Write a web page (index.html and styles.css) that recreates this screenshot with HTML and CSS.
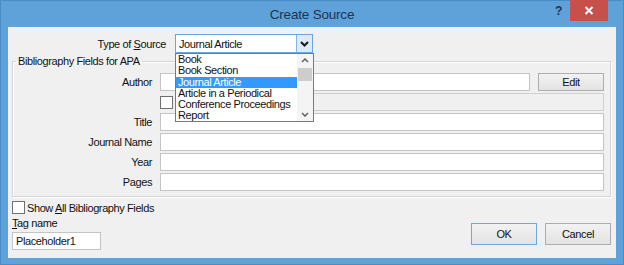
FILE: index.html
```html
<!DOCTYPE html>
<html lang="en">
<head>
  <meta charset="UTF-8" />
  <title>Create Source</title>
  <link rel="stylesheet" href="styles.css">
</head>
<body>

  <div class="window">
    <!-- title bar -->
    <div class="titlebar">
      <span class="title">Create Source</span>
      <span class="help">?</span>
      <span class="close">
        <svg width="10" height="9" viewBox="0 0 10 9"><path d="M1.5 1 L8.5 8 M8.5 1 L1.5 8" stroke="#fff" stroke-width="2"/></svg>
      </span>
    </div>

    <div class="client">
      <!-- type of source -->
      <div class="source-row">
        <span class="source-label">Type of <u>S</u>ource</span>
        <div class="combo-wrap">
          <div class="combo">
            <span class="combo-text">Journal Article</span>
            <span class="combo-btn">
              <svg width="9" height="6" viewBox="0 0 9 6"><path d="M1 1 L4.5 4.5 L8 1" fill="none" stroke="#1a1a1a" stroke-width="2"/></svg>
            </span>
          </div>
          <div class="dropdown">
            <ul class="options">
              <li>Book</li>
              <li>Book Section</li>
              <li class="selected">Journal Article</li>
              <li>Article in a Periodical</li>
              <li>Conference Proceedings</li>
              <li>Report</li>
            </ul>
            <div class="scrollbar">
              <span class="arrow">
                <svg width="8" height="5" viewBox="0 0 8 5"><path d="M1 4 L4 1 L7 4" fill="none" stroke="#606060" stroke-width="1.5"/></svg>
              </span>
              <span class="thumb"></span>
              <span class="track"></span>
              <span class="arrow">
                <svg width="8" height="5" viewBox="0 0 8 5"><path d="M1 1 L4 4 L7 1" fill="none" stroke="#606060" stroke-width="1.5"/></svg>
              </span>
            </div>
          </div>
        </div>
      </div>

      <!-- bibliography fields -->
      <fieldset class="group">
        <legend>Bibliography Fields for APA</legend>
        <div class="fields">
          <span class="field-label">Author</span>
          <div class="author-cell">
            <span class="textbox"></span>
            <span class="btn">Edit</span>
          </div>

          <span></span>
          <div class="corp-cell">
            <span class="checkbox"></span>
            <span class="textbox disabled"></span>
          </div>

          <span class="field-label">Title</span>
          <span class="textbox"></span>

          <span class="field-label">Journal Name</span>
          <span class="textbox"></span>

          <span class="field-label">Year</span>
          <span class="textbox"></span>

          <span class="field-label">Pages</span>
          <span class="textbox"></span>
        </div>
      </fieldset>

      <!-- bottom -->
      <div class="bottom">
        <div class="bottom-left">
          <div class="show-all">
            <span class="checkbox"></span>
            <span>Show <u>A</u>ll Bibliography Fields</span>
          </div>
          <div class="tag-label"><u>T</u>ag name</div>
          <span class="textbox tag-box">Placeholder1</span>
        </div>
        <div class="actions">
          <span class="btn btn-default">OK</span>
          <span class="btn">Cancel</span>
        </div>
      </div>
    </div>
  </div>

</body>
</html>
```

FILE: styles.css
```css
body {
  margin: 0;
  font-family: "Liberation Sans", Arial, sans-serif;
  font-size: 11px;
  letter-spacing: -0.4px;
  color: #111;
  background: #fff;
}

/* window frame */
.window {
  box-sizing: border-box;
  width: 624px;
  height: 265px;
  background: #5fa2da;
  border: 1px solid #4a8cc6;
  padding: 0 7px 6px 7px;
}

.titlebar {
  position: relative;
  height: 26px;
  display: flex;
  justify-content: center;
  align-items: center;
}
.title {
  font-size: 13.5px;
  letter-spacing: -0.2px;
  color: #1d3450;
  padding-top: 1px;
}
.help {
  position: absolute;
  right: 54px;
  top: 3px;
  font-weight: bold;
  font-size: 12px;
  color: #1d3450;
}
.close {
  position: absolute;
  right: 8px;
  top: -1px;
  width: 38px;
  height: 21px;
  background: #c7504b;
  display: flex;
  justify-content: center;
  align-items: center;
}

.client {
  background: #f0f0f0;
  height: 231px;
}

/* type of source */
.source-row {
  display: flex;
  align-items: center;
  gap: 9px;
  padding-top: 7px;
}
.source-label {
  width: 158px;
  text-align: right;
}
.combo-wrap {
  position: relative;
}
.combo {
  box-sizing: border-box;
  width: 138px;
  height: 19px;
  border: 1px solid #6aa6e3;
  background: #fff;
  display: flex;
  align-items: center;
}
.combo-text {
  flex: 1;
  padding-left: 3px;
}
.combo-btn {
  width: 15px;
  height: 100%;
  background: #dceafa;
  border-left: 1px solid #7eb4ea;
  display: flex;
  justify-content: center;
  align-items: center;
}

.dropdown {
  position: absolute;
  top: 100%;
  left: 0;
  z-index: 5;
  box-sizing: border-box;
  width: 139px;
  height: 69px;
  border: 1px solid #7a7a7a;
  background: #fff;
  display: flex;
}
.options {
  list-style: none;
  margin: 0;
  padding: 0;
  flex: 1;
}
.options li {
  height: 11.3px;
  line-height: 11.3px;
  padding-left: 2px;
  white-space: nowrap;
}
.options li.selected {
  background: #3399ff;
  color: #fff;
}
.scrollbar {
  width: 16px;
  background: #f4f4f4;
  display: flex;
  flex-direction: column;
}
.scrollbar .arrow {
  height: 13px;
  display: flex;
  justify-content: center;
  align-items: center;
}
.scrollbar .thumb {
  height: 13px;
  margin: 1px 1px 0 1px;
  background: #cdcdcd;
}
.scrollbar .track {
  flex: 1;
}

/* group box */
.group {
  margin: 2px 5px 0 4px;
  padding: 0 6px 5px 0;
  border: 1px solid #d5d5d5;
  box-shadow: inset 1px 1px 0 #fff, 1px 1px 0 #fff;
  min-inline-size: 0;
}
.group legend {
  margin-left: 3px;
  padding: 0 2px;
  line-height: 13px;
}

.fields {
  display: grid;
  grid-template-columns: 139px 1fr;
  column-gap: 8px;
  row-gap: 2px;
  grid-auto-rows: 18px;
  margin-top: 5px;
}
.field-label {
  text-align: right;
  align-self: center;
}
.author-cell,
.corp-cell {
  display: flex;
  align-items: center;
  gap: 8px;
}
.corp-cell {
  gap: 2px;
}

.textbox {
  box-sizing: border-box;
  display: block;
  height: 18px;
  flex: 1;
  background: #fff;
  border: 1px solid #c4c4c4;
}
.textbox.disabled {
  background: #f0f0f0;
  border-color: #cfcfcf;
}

.checkbox {
  box-sizing: border-box;
  width: 13px;
  height: 13px;
  border: 1px solid #707070;
  background: #fff;
  flex: none;
}

.btn {
  box-sizing: border-box;
  width: 66px;
  height: 18px;
  border: 1px solid #adadad;
  background: linear-gradient(#f2f2f2, #e3e3e3);
  display: flex;
  justify-content: center;
  align-items: center;
  flex: none;
}

/* bottom area */
.bottom {
  display: flex;
  justify-content: space-between;
  align-items: flex-start;
  padding: 4px 5px 0 4px;
}
.show-all {
  display: flex;
  align-items: center;
  gap: 2px;
  height: 13px;
}
.tag-label {
  margin-top: 2px;
  line-height: 14px;
}
.tag-box {
  width: 89px;
  margin-top: 2px;
  padding-left: 3px;
  line-height: 16px;
}
.actions {
  display: flex;
  gap: 8px;
  margin-top: 22px;
}
.actions .btn {
  height: 22px;
}
.btn-default {
  border-color: #6ea7df;
}
```
